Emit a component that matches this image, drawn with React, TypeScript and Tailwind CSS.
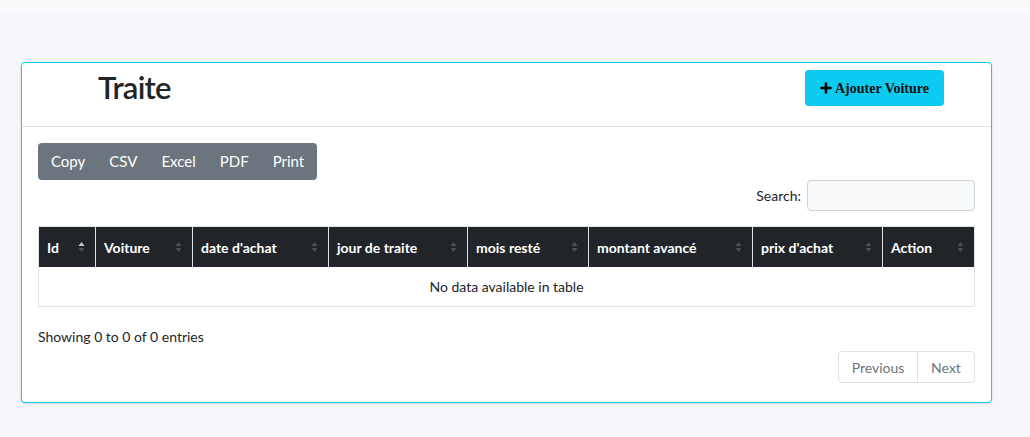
import React from 'react'

const columns = [
  { label: 'Id', w: 'w-[57px]', up: true },
  { label: 'Voiture', w: 'w-[97px]' },
  { label: "date d'achat", w: 'w-[136px]' },
  { label: 'jour de traite', w: 'w-[139px]' },
  { label: 'mois resté', w: 'w-[121px]' },
  { label: 'montant avancé', w: 'w-[164px]' },
  { label: "prix d'achat", w: 'w-[130px]' },
  { label: 'Action', w: '' },
]

const SortIcon: React.FC<{ up?: boolean }> = ({ up }) => (
  <svg width="7" height="12" viewBox="0 0 7 12" className="absolute right-[10px] top-[14px]">
    <path d="M3.5 1 L6.5 5 L0.5 5 Z" fill={up ? '#c7c9cc' : '#4b5056'} />
    <path d="M3.5 11 L6.5 7 L0.5 7 Z" fill="#4b5056" />
  </svg>
)

export default function App() {
  return (
    <div className="min-h-[437px] w-[1030px] bg-[#f4f6f9] font-['Lato',sans-serif] text-[#212529]">
      <div className="h-[14px] bg-[#f8f9fa]" />
      <div className="pl-[21px] pr-[38px] pt-[48px]">
        <div className="rounded-[4px] border border-[#0dcaf0] bg-white shadow-sm">
          <div className="flex h-[64px] items-start justify-between border-b border-[#dee2e6] pl-[76px] pr-[47px] pt-[7px]">
            <h1 className="mt-[2px] text-[31px] font-semibold leading-none tracking-tight text-[#212529]">Traite</h1>
            <button className="flex h-[36px] w-[139px] items-center justify-center gap-[3px] rounded-[4px] bg-[#0dcaf0] font-['Liberation_Serif',serif] text-[14px] font-bold text-[#111]">
              <svg width="12" height="12" viewBox="0 0 12 12">
                <path d="M6 0.5 V11.5 M0.5 6 H11.5" stroke="#000" strokeWidth="2.6" />
              </svg>
              Ajouter Voiture
            </button>
          </div>
          <div className="px-[16px] pt-[16px] pb-[19px]">
            <div className="flex">
              <div className="flex h-[37px] items-center rounded-[4px] bg-[#6c757d] px-[1px] text-[15px] text-white">
                <span className="px-[12px]">Copy</span>
                <span className="px-[12px]">CSV</span>
                <span className="px-[12px]">Excel</span>
                <span className="px-[12px]">PDF</span>
                <span className="px-[12px]">Print</span>
              </div>
            </div>
            <div className="flex items-center justify-end gap-[6px]">
              <span className="text-[14px]">Search:</span>
              <input className="h-[31px] w-[168px] rounded-[4px] border border-[#ced4da] bg-[#f8f9fa]" />
            </div>
            <div className="mt-[15px] border border-[#dee2e6]">
              <div className="flex h-[40px] bg-[#212529] text-[14px] font-bold text-white">
                {columns.map((c, i) => (
                  <div
                    key={c.label}
                    className={`relative flex items-center pl-[8px] ${c.w} ${i < columns.length - 1 ? 'border-r border-[#dee2e6]' : 'flex-1'}`}
                  >
                    {c.label}
                    <SortIcon up={c.up} />
                  </div>
                ))}
              </div>
              <div className="flex h-[39px] items-center justify-center text-[14px]">No data available in table</div>
            </div>
            <div className="mt-[19px] text-[14px]">Showing 0 to 0 of 0 entries</div>
            <div className="mt-[4px] flex justify-end">
              <div className="flex h-[32px] rounded-[4px] border border-[#dee2e6] text-[14px] text-[#6c757d]">
                <span className="flex w-[79px] items-center justify-center border-r border-[#dee2e6]">Previous</span>
                <span className="flex w-[56px] items-center justify-center">Next</span>
              </div>
            </div>
          </div>
        </div>
      </div>
    </div>
  )
}
